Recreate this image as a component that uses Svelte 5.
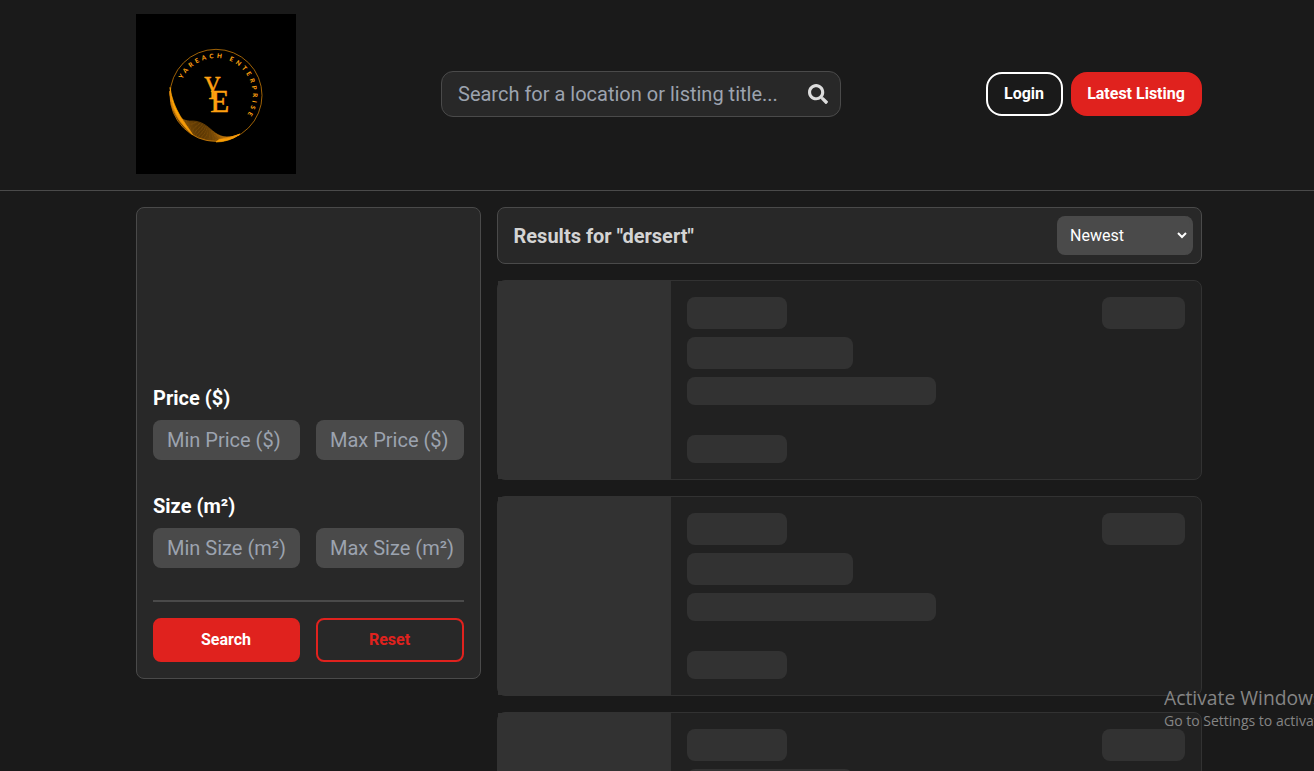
<script>
  const cards = [0, 1, 2];
  const steps = Array.from({ length: 13 }, (_, i) => i / 12);
  // Each strand blends from the outer rim (t = 0) to the wave crest (t = 1).
  const rim = [[102, 232], [104, 290], [128, 330], [170, 362], [208, 388], [262, 388], [310, 362]];
  const crest = [[102, 232], [106, 285], [124, 318], [160, 321], [232, 316], [226, 392], [310, 362]];
  const strand = (t) => {
    const p = rim.map((r, i) => [r[0] + (crest[i][0] - r[0]) * t, r[1] + (crest[i][1] - r[1]) * t].join(' '));
    return `M${p[0]}C${p[1]} ${p[2]} ${p[3]}C${p[4]} ${p[5]} ${p[6]}`;
  };
</script>

<header>
  <div class="container bar">
    <svg class="logo" viewBox="0 0 480 480" role="img" aria-label="Yareach Enterprise">
      <rect width="480" height="480" fill="#000" />
      <circle cx="240" cy="244" r="138" fill="none" stroke="#d98508" stroke-width="2.200" />
      <path d="M102 220C103 278 128 328 170 362C148 326 112 290 102 220ZM250 376Q278 374 312 360Q280 384 240 384Z" fill="#ffa500" stroke="#ffa500" stroke-width="2" />
      <path d={strand(1) + 'A138 138 0 0 1 102 232Z'} fill="#ff9d09" opacity=".22" />
      <g fill="none" stroke="#f09510" stroke-width="1.300" opacity=".8">
        {#each steps as t}
          <path d={strand(t)} />
        {/each}
      </g>
      <path id="ring" d="M139 196A111 111 0 1 1 295.500 339" fill="none" />
      <text class="ring-text"><textPath href="#ring">YAREACH ENTERPRISE</textPath></text>
      <text class="mono" x="205" y="256" font-size="98" textLength="50" lengthAdjust="spacingAndGlyphs">Y</text>
      <text class="mono" x="223" y="294" font-size="97" textLength="57" lengthAdjust="spacingAndGlyphs">E</text>
    </svg>
    <form class="search">
      <input placeholder="Search for a location or listing title..." />
      <svg viewBox="0 0 512 512" width="20" height="20"><path fill="#dcdcdc" d="M505 442.700 405.300 343c-4.500-4.500-10.600-7-17-7H372c27.600-35.300 44-79.700 44-128C416 93.100 322.900 0 208 0S0 93.100 0 208s93.100 208 208 208c48.300 0 92.700-16.400 128-44v16.300c0 6.400 2.500 12.500 7 17l99.700 99.700c9.400 9.400 24.600 9.400 33.900 0l28.300-28.300c9.400-9.400 9.400-24.600.1-34zM208 336c-70.700 0-128-57.200-128-128 0-70.700 57.200-128 128-128 70.700 0 128 57.200 128 128 0 70.700-57.200 128-128 128z" /></svg>
    </form>
    <nav>
      <button class="login">Login</button>
      <button class="latest">Latest Listing</button>
    </nav>
  </div>
</header>

<main class="container">
  <aside>
    <h2>Price ($)</h2>
    <div class="pair">
      <input placeholder="Min Price ($)" />
      <input placeholder="Max Price ($)" />
    </div>
    <h2 class="size">Size (m²)</h2>
    <div class="pair">
      <input placeholder="Min Size (m²)" />
      <input placeholder="Max Size (m²)" />
    </div>
    <hr />
    <div class="pair">
      <button class="submit">Search</button>
      <button class="reset">Reset</button>
    </div>
  </aside>

  <section>
    <div class="results">
      <h1>Results for "dersert"</h1>
      <select><option>Newest</option><option>Oldest</option></select>
    </div>
    {#each cards as card (card)}
      <article>
        <div class="photo"></div>
        <div class="body">
          <div class="top"><i class="b w1"></i><i class="b w4"></i></div>
          <i class="b w2"></i>
          <i class="b w3 low"></i>
          <i class="b w1 low last"></i>
        </div>
      </article>
    {/each}
  </section>
</main>

<div class="notice">
  <p class="big">Activate Windows</p>
  <p class="small">Go to Settings to activate Windows.</p>
</div>

<style>
  :global(body) { background: #1a1a1a; overflow: hidden; font-family: Roboto, sans-serif; }
  :global(#app) { height: 771px; overflow: hidden; }
  .container { width: 1066px; margin-left: 136px; }
  header { box-sizing: border-box; height: 191px; padding-top: 14px; border-bottom: 1px solid #4a4a4a; }
  .bar { display: flex; justify-content: space-between; align-items: center; }
  .logo { width: 160px; height: 160px; display: block; }
  .ring-text { font: 900 19px Lato, sans-serif; letter-spacing: 9.200px; fill: #ffa010; }
  .mono { font-family: "Liberation Serif", serif; fill: #ffa010; stroke: #ffa010; stroke-width: 1.500px; }
  input, button, select { font-family: inherit; box-sizing: border-box; margin: 0; outline: none; }
  input { min-width: 0; border: 0; color: #fff; font-size: 20px; }
  input::placeholder { color: #9ca3af; opacity: 1; }
  .search { box-sizing: border-box; width: 400px; height: 46px; border: 1px solid #4a4a4a; border-radius: 12px; background: #282828; display: flex; align-items: center; padding: 0 12px 0 16px; }
  .search input { flex: 1; background: transparent; padding: 0; }
  nav { display: flex; gap: 8px; }
  button { height: 44px; font-size: 16px; font-weight: 700; color: #fff; border: 2px solid #e0221e; padding: 0 1px 2px 0; }
  .login { width: 77px; background: transparent; border-color: #fff; border-radius: 16px; }
  .latest { width: 131px; background: #e0221e; border-radius: 16px; }
  main { display: flex; align-items: flex-start; gap: 16px; padding-top: 16px; }
  aside { box-sizing: border-box; width: 345px; height: 472px; border: 1px solid #4a4a4a; border-radius: 8px; background: #282828; padding: 176px 16px 16px; }
  h1, h2 { margin: 0; font-size: 20px; font-weight: 700; line-height: 28px; }
  h2 { color: #fff; margin-bottom: 8px; }
  h2.size { margin-top: 32px; }
  .pair { display: grid; grid-template-columns: 147px 1fr; gap: 16px; }
  .pair input { height: 40px; border-radius: 8px; background: #4a4a4a; padding: 0 0 0 14px; }
  hr { border: 0; height: 2px; background: #4a4a4a; margin: 32px 0 16px; }
  .submit, .reset { border-radius: 8px; }
  .submit { background: #e0221e; }
  .reset { background: transparent; color: #e0221e; }
  section { flex: 1; display: flex; flex-direction: column; gap: 16px; }
  .results { box-sizing: border-box; height: 57px; border: 1px solid #4a4a4a; border-radius: 8px; background: #282828; display: flex; justify-content: space-between; align-items: center; padding: 0 8px 0 15.500px; }
  h1 { color: #d4d4d4; }
  select { width: 136px; height: 39px; border: 0; border-right: 3px solid #4a4a4a; border-radius: 8px; background: #4a4a4a; color: #fff; font-size: 16px; padding: 0 0 0 9px; }
  article { box-sizing: border-box; height: 200px; flex: none; border: 1px solid #323232; border-radius: 8px; background: #212121; display: flex; }
  .photo { width: 173px; background: #323232; }
  .body { flex: 1; padding: 16px; display: flex; flex-direction: column; gap: 8px; }
  .top { display: flex; justify-content: space-between; }
  .b { display: block; height: 32px; border-radius: 8px; background: #323232; }
  .low { height: 28px; }
  .last { margin-top: 22px; }
  .w1 { width: 100px; } .w2 { width: 166px; } .w3 { width: 249px; } .w4 { width: 83px; }
  .notice { position: absolute; left: 1164px; top: 685px; width: 150px; overflow: hidden; white-space: nowrap; font-family: "Open Sans", sans-serif; color: #858585; pointer-events: none; }
  .notice p { margin: 0; }
  .big { font-size: 19.300px; line-height: 26px; }
  .small { font-size: 14px; line-height: 20px; }
</style>
